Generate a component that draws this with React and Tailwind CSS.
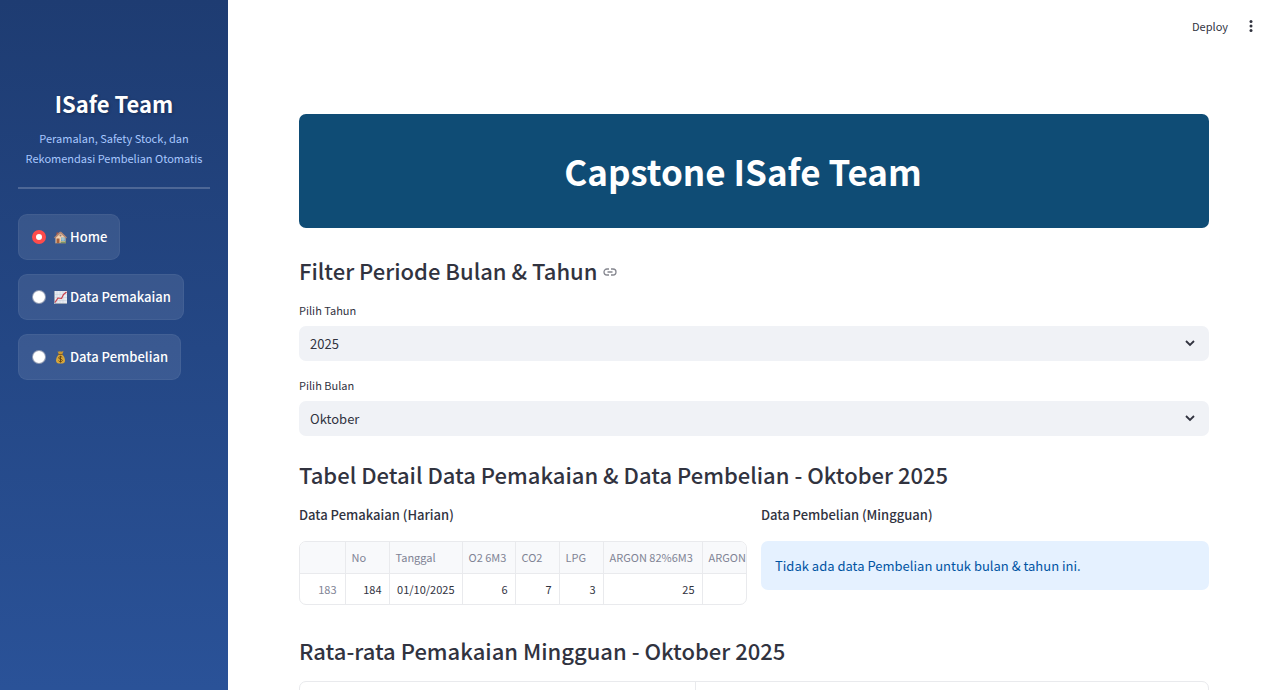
import { useState } from "react";

const pages = [
  { id: "home", label: "Home", Icon: HouseIcon },
  { id: "pemakaian", label: "Data Pemakaian", Icon: ChartIcon },
  { id: "pembelian", label: "Data Pembelian", Icon: MoneyBagIcon },
];

const columns = ["No", "Tanggal", "O2 6M3", "CO2", "LPG", "ARGON 82%6M3", "ARGON"];
const rows = [{ index: 183, cells: ["184", "01/10/2025", "6", "7", "3", "25", ""] }];

const months = [
  "Januari", "Februari", "Maret", "April", "Mei", "Juni",
  "Juli", "Agustus", "September", "Oktober", "November", "Desember",
];

function HouseIcon() {
  return (
    <svg viewBox="0 0 26 26" className="h-[13px] w-[13px] shrink-0" aria-hidden="true">
      <path d="M5 3h4v7H5z" fill="#a8553f" />
      <path d="M3 12 14 3l9 8v13H3z" fill="#f3d0ae" />
      <path d="M0 13 11 2c1-1 3-1 4 0l11 11-2 2L13 5 2 15z" fill="#b08673" />
      <path d="M5 15h6v9H5z" fill="#a5603d" />
      <path d="M14 13h8v7h-8z" fill="#6fa9c4" />
      <path d="M18 13v7M14 16h8" stroke="#e8e4dc" strokeWidth="1" />
      <circle cx="13" cy="9" r="2" fill="#8d7a78" />
      <path d="M13 21h11v3H13z" fill="#7d9464" />
      <path d="M2 24h22v1H2z" fill="#8d8478" />
    </svg>
  );
}

function ChartIcon() {
  return (
    <svg viewBox="0 0 26 26" className="h-[13px] w-[13px] shrink-0" aria-hidden="true">
      <path d="M0 0h26v26H0z" fill="#e8ebf1" />
      <path d="M6 0v26M12 0v26M18 0v26M0 7h26M0 13h26M0 19h26" stroke="#c3cfdd" strokeWidth="1" />
      <path d="M1 0v25h25" fill="none" stroke="#9aa5b5" strokeWidth="2" />
      <path d="m2 23 6-9 7 1 4-8 6-5" fill="none" stroke="#c9414c" strokeWidth="2.5" strokeLinejoin="round" />
    </svg>
  );
}

function MoneyBagIcon() {
  return (
    <svg viewBox="0 0 26 26" className="h-[13px] w-[13px] shrink-0" aria-hidden="true">
      <path d="M7 1c2 1 4-1 6 0s4-1 6 0l-3 6h-6z" fill="#c9962f" />
      <path d="M10 7h6c4 3 6 8 6 12 0 5-3 6-9 6s-9-1-9-6c0-4 2-9 6-12z" fill="#d7a63a" />
      <path d="M9 6h8v2H9z" fill="#8a5f1b" />
      <path
        d="M16.5 13c-.8-1.300-2-1.700-3.500-1.700-2 0-3.500.9-3.500 2.500 0 3.600 7.200 1.800 7.200 5 0 1.600-1.600 2.500-3.700 2.500-1.700 0-3-.6-3.800-1.900M13 9.500v13.500"
        fill="none"
        stroke="#5d4012"
        strokeWidth="1.8"
      />
    </svg>
  );
}

function SelectField({ id, label, value, onChange, options }) {
  return (
    <div>
      <label htmlFor={id} className="block text-[11px] leading-5 text-[#31333f]">
        {label}
      </label>
      <div className="relative mt-[6px]">
        <select
          id={id}
          value={value}
          onChange={onChange}
          className="block h-[35px] w-full appearance-none rounded-[7px] bg-[#f0f2f6] px-[11px] text-[13px] text-[#31333f] outline-none"
        >
          {options.map((option) => (
            <option key={option}>{option}</option>
          ))}
        </select>
        <svg
          viewBox="0 0 10 10"
          className="pointer-events-none absolute top-3 right-[14px] h-[10px] w-[10px]"
          aria-hidden="true"
        >
          <path d="m1 3 4 4 4-4" fill="none" stroke="#31333f" strokeWidth="1.8" />
        </svg>
      </div>
    </div>
  );
}

function SectionTitle({ children }) {
  return <h2 className="text-[22px] leading-[30px] font-medium text-[#31333f]">{children}</h2>;
}

function Sidebar({ page, onChange }) {
  return (
    <aside className="w-[228px] shrink-0 bg-linear-to-b from-[#1e3c72] to-[#2a5298] px-[18px] pt-[86px]">
      <div className="border-b-2 border-white/20 pb-[19px] text-center">
        <h1 className="text-[22px] leading-[34px] font-bold text-white [text-shadow:1px_1px_3px_rgba(0,0,0,0.3)]">
          ISafe Team
        </h1>
        <p className="mt-2 text-[11px] leading-5 text-[#a8c8ff]">
          Peramalan, Safety Stock, dan
          <br />
          Rekomendasi Pembelian Otomatis
        </p>
      </div>
      <div role="radiogroup" aria-label="Menu" className="mt-[25px] flex flex-col items-start gap-[14px]">
        {pages.map(({ id, label, Icon }) => (
          <label
            key={id}
            className="flex h-[46px] cursor-pointer items-center rounded-[9px] border border-white/5 bg-white/10 px-3 text-[13px] font-medium text-white"
          >
            <input
              type="radio"
              name="page"
              value={id}
              checked={page === id}
              onChange={() => onChange(id)}
              className="mr-2 ml-px h-[14px] w-[14px] appearance-none rounded-full border border-[#2b3f6b]/50 bg-white checked:border-4 checked:border-[#ff4b4b]"
            />
            <Icon />
            <span className="ml-[3px]">{label}</span>
          </label>
        ))}
      </div>
    </aside>
  );
}

function UsageTable() {
  return (
    <div className="overflow-hidden rounded-[7px] border border-[#e9eaed]">
      <table className="w-full table-fixed border-collapse text-[11px] text-[#31333f]">
        <colgroup>
          <col className="w-[45px]" />
          <col className="w-[44px]" />
          <col className="w-[73px]" />
          <col className="w-[53px]" />
          <col className="w-[44px]" />
          <col className="w-[44px]" />
          <col className="w-[99px]" />
          <col />
        </colgroup>
        <thead>
          <tr className="h-[31px] border-b border-[#e9eaed] bg-[#f8f9fb] text-left whitespace-nowrap text-[#808495]">
            <th aria-label="Index" />
            {columns.map((column) => (
              <th key={column} className="border-l border-[#e9eaed] pl-[6px] font-normal">
                {column}
              </th>
            ))}
          </tr>
        </thead>
        <tbody>
          {rows.map((row) => (
            <tr key={row.index} className="h-[31px] text-right">
              <th className="px-2 font-normal text-[#808495]">{row.index}</th>
              {row.cells.map((cell, i) => (
                <td key={columns[i]} className="border-l border-[#e9eaed] pr-[7px]">
                  {cell}
                </td>
              ))}
            </tr>
          ))}
        </tbody>
      </table>
    </div>
  );
}

export default function App() {
  const [page, setPage] = useState("home");
  const [year, setYear] = useState("2025");
  const [month, setMonth] = useState("Oktober");

  return (
    <div className="flex h-screen overflow-hidden bg-white font-['Noto_Sans_CJK_SC',sans-serif]">
      <Sidebar page={page} onChange={setPage} />

      <main className="min-w-0 flex-1 overflow-y-auto [scrollbar-width:none]">
        <header className="flex h-[52px] items-center justify-end gap-4 pr-[22px] text-[#31333f]">
          <button type="button" className="text-[11px]">Deploy</button>
          <button type="button" aria-label="Menu">
            <svg viewBox="0 0 14 14" className="h-[14px] w-[14px]" fill="currentColor" aria-hidden="true">
              <circle cx="7" cy="2.5" r="1.5" />
              <circle cx="7" cy="7" r="1.5" />
              <circle cx="7" cy="11.5" r="1.5" />
            </svg>
          </button>
        </header>

        <div className="px-[71px] pt-[62px] pb-16">
          <div className="flex h-[114px] items-center justify-center rounded-[7px] bg-[#0f4c75] pr-[22px]">
            <h1 className="text-[35px] leading-[46px] font-bold text-white">Capstone ISafe Team</h1>
          </div>

          <div className="mt-[27px] flex items-center gap-[6px]">
            <SectionTitle>Filter Periode Bulan &amp; Tahun</SectionTitle>
            <a href="#filter" aria-label="Link" className="mt-1 text-[#85868f]">
              <svg viewBox="0 0 14 8" className="h-2 w-[14px]" fill="none" stroke="currentColor" strokeWidth="1.3" aria-hidden="true">
                <path d="M6 1H4a3 3 0 0 0 0 6h2M8 1h2a3 3 0 0 1 0 6H8M4.500 4h5" />
              </svg>
            </a>
          </div>

          <div className="mt-[15px] flex flex-col gap-[14px]">
            <SelectField
              id="tahun"
              label="Pilih Tahun"
              value={year}
              onChange={(e) => setYear(e.target.value)}
              options={["2023", "2024", "2025"]}
            />
            <SelectField
              id="bulan"
              label="Pilih Bulan"
              value={month}
              onChange={(e) => setMonth(e.target.value)}
              options={months}
            />
          </div>

          <div className="mt-[23px]">
            <SectionTitle>
              Tabel Detail Data Pemakaian &amp; Data Pembelian - {month} {year}
            </SectionTitle>
          </div>

          <div className="mt-4 grid grid-cols-2 gap-[14px]">
            <div className="min-w-0">
              <h3 className="mb-4 text-[13px] leading-5 font-medium text-[#31333f]">Data Pemakaian (Harian)</h3>
              <UsageTable />
            </div>
            <div className="min-w-0">
              <h3 className="mb-4 text-[13px] leading-5 font-medium text-[#31333f]">Data Pembelian (Mingguan)</h3>
              <p className="rounded-[7px] bg-[#e5f1ff] px-[14px] py-[14px] text-[13px] leading-[21px] text-[#0054a3]">
                Tidak ada data Pembelian untuk bulan &amp; tahun ini.
              </p>
            </div>
          </div>

          <div className="mt-[30px]">
            <SectionTitle>
              Rata-rata Pemakaian Mingguan - {month} {year}
            </SectionTitle>
          </div>

          <div className="mt-4 grid h-[120px] grid-cols-[396px_1fr] divide-x divide-[#e9eaed] rounded-[7px] border border-[#e9eaed]">
            <div />
            <div />
          </div>
        </div>
      </main>
    </div>
  );
}
